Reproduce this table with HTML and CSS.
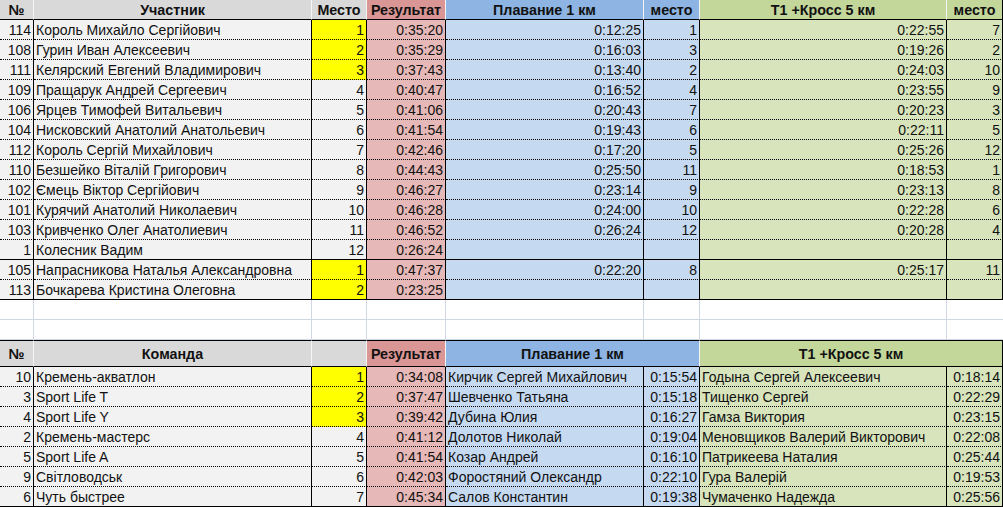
FILE: index.html
```html
<!DOCTYPE html>
<html lang="ru">
<head>
<meta charset="utf-8">
<title>Результаты</title>
<link rel="stylesheet" href="styles.css">
</head>
<body>
<div class="sheet">
  <div class="row head">
    <div class="hg">№</div>
    <div class="hg">Участник</div>
    <div class="hg">Место</div>
    <div class="hp">Результат</div>
    <div class="hb">Плавание 1 км</div>
    <div class="hb">место</div>
    <div class="hgr">T1 +Кросс 5 км</div>
    <div class="hgr">место</div>
  </div>

  <div class="row"><div class="g n">114</div><div class="g">Король Михайло Сергійович</div><div class="y n">1</div><div class="p n">0:35:20</div><div class="b n">0:12:25</div><div class="b n">1</div><div class="gr n">0:22:55</div><div class="gr n">7</div></div>
  <div class="row"><div class="g n">108</div><div class="g">Гурин Иван Алексеевич</div><div class="y n">2</div><div class="p n">0:35:29</div><div class="b n">0:16:03</div><div class="b n">3</div><div class="gr n">0:19:26</div><div class="gr n">2</div></div>
  <div class="row"><div class="g n">111</div><div class="g">Келярский Евгений Владимирович</div><div class="y n">3</div><div class="p n">0:37:43</div><div class="b n">0:13:40</div><div class="b n">2</div><div class="gr n">0:24:03</div><div class="gr n">10</div></div>
  <div class="row"><div class="g n">109</div><div class="g">Пращарук Андрей Сергеевич</div><div class="g n">4</div><div class="p n">0:40:47</div><div class="b n">0:16:52</div><div class="b n">4</div><div class="gr n">0:23:55</div><div class="gr n">9</div></div>
  <div class="row"><div class="g n">106</div><div class="g">Ярцев Тимофей Витальевич</div><div class="g n">5</div><div class="p n">0:41:06</div><div class="b n">0:20:43</div><div class="b n">7</div><div class="gr n">0:20:23</div><div class="gr n">3</div></div>
  <div class="row"><div class="g n">104</div><div class="g">Нисковский Анатолий Анатольевич</div><div class="g n">6</div><div class="p n">0:41:54</div><div class="b n">0:19:43</div><div class="b n">6</div><div class="gr n">0:22:11</div><div class="gr n">5</div></div>
  <div class="row"><div class="g n">112</div><div class="g">Король Сергій Михайлович</div><div class="g n">7</div><div class="p n">0:42:46</div><div class="b n">0:17:20</div><div class="b n">5</div><div class="gr n">0:25:26</div><div class="gr n">12</div></div>
  <div class="row"><div class="g n">110</div><div class="g">Безшейко Віталій Григорович</div><div class="g n">8</div><div class="p n">0:44:43</div><div class="b n">0:25:50</div><div class="b n">11</div><div class="gr n">0:18:53</div><div class="gr n">1</div></div>
  <div class="row"><div class="g n">102</div><div class="g">Ємець Віктор Сергійович</div><div class="g n">9</div><div class="p n">0:46:27</div><div class="b n">0:23:14</div><div class="b n">9</div><div class="gr n">0:23:13</div><div class="gr n">8</div></div>
  <div class="row"><div class="g n">101</div><div class="g">Курячий Анатолий Николаевич</div><div class="g n">10</div><div class="p n">0:46:28</div><div class="b n">0:24:00</div><div class="b n">10</div><div class="gr n">0:22:28</div><div class="gr n">6</div></div>
  <div class="row"><div class="g n">103</div><div class="g">Кривченко Олег Анатолиевич</div><div class="g n">11</div><div class="p n">0:46:52</div><div class="b n">0:26:24</div><div class="b n">12</div><div class="gr n">0:20:28</div><div class="gr n">4</div></div>
  <div class="row end"><div class="g n">1</div><div class="g">Колесник Вадим</div><div class="g n">12</div><div class="p n">0:26:24</div><div class="b n"></div><div class="b n"></div><div class="gr n"></div><div class="gr n"></div></div>
  <div class="row"><div class="g n">105</div><div class="g">Напрасникова Наталья Александровна</div><div class="y n">1</div><div class="p n">0:47:37</div><div class="b n">0:22:20</div><div class="b n">8</div><div class="gr n">0:25:17</div><div class="gr n">11</div></div>
  <div class="row end"><div class="g n">113</div><div class="g">Бочкарева Кристина Олеговна</div><div class="y n">2</div><div class="p n">0:23:25</div><div class="b n"></div><div class="b n"></div><div class="gr n"></div><div class="gr n"></div></div>

  <div class="row blank"><div></div><div></div><div></div><div></div><div></div><div></div><div></div><div></div></div>
  <div class="row blank"><div></div><div></div><div></div><div></div><div></div><div></div><div></div><div></div></div>

  <div class="row head head2">
    <div class="hg">№</div>
    <div class="hg">Команда</div>
    <div class="hg"></div>
    <div class="hp">Результат</div>
    <div class="hb span2">Плавание 1 км</div>
    <div class="hgr span2">T1 +Кросс 5 км</div>
  </div>

  <div class="row"><div class="g n">10</div><div class="g">Кремень-акватлон</div><div class="y n">1</div><div class="p n">0:34:08</div><div class="b">Кирчик Сергей Михайлович</div><div class="b n">0:15:54</div><div class="gr">Годына Сергей Алексеевич</div><div class="gr n">0:18:14</div></div>
  <div class="row"><div class="g n">3</div><div class="g">Sport Life T</div><div class="y n">2</div><div class="p n">0:37:47</div><div class="b">Шевченко Татьяна</div><div class="b n">0:15:18</div><div class="gr">Тищенко Сергей</div><div class="gr n">0:22:29</div></div>
  <div class="row"><div class="g n">4</div><div class="g">Sport Life Y</div><div class="y n">3</div><div class="p n">0:39:42</div><div class="b">Дубина Юлия</div><div class="b n">0:16:27</div><div class="gr">Гамза Виктория</div><div class="gr n">0:23:15</div></div>
  <div class="row"><div class="g n">2</div><div class="g">Кремень-мастерс</div><div class="g n">4</div><div class="p n">0:41:12</div><div class="b">Долотов Николай</div><div class="b n">0:19:04</div><div class="gr">Меновщиков Валерий Викторович</div><div class="gr n">0:22:08</div></div>
  <div class="row"><div class="g n">5</div><div class="g">Sport Life A</div><div class="g n">5</div><div class="p n">0:41:54</div><div class="b">Козар Андрей</div><div class="b n">0:16:10</div><div class="gr">Патрикеева Наталия</div><div class="gr n">0:25:44</div></div>
  <div class="row"><div class="g n">9</div><div class="g">Світловодськ</div><div class="g n">6</div><div class="p n">0:42:03</div><div class="b">Форостяний Олександр</div><div class="b n">0:22:10</div><div class="gr">Гура Валерій</div><div class="gr n">0:19:53</div></div>
  <div class="row end"><div class="g n">6</div><div class="g">Чуть быстрее</div><div class="g n">7</div><div class="p n">0:45:34</div><div class="b">Салов Константин</div><div class="b n">0:19:38</div><div class="gr">Чумаченко Надежда</div><div class="gr n">0:25:56</div></div>
</div>
</body>
</html>
```

FILE: styles.css
```css
html, body {
  margin: 0;
  padding: 0;
  background: #ffffff;
}

.sheet {
  width: 1003px;
  font-family: "Liberation Sans", Arial, sans-serif;
  font-size: 14px;
  color: #111;
}

.row {
  display: grid;
  grid-template-columns: 34px 278px 55px 79px 198px 56px 247px 56px;
}

.row > div {
  box-sizing: border-box;
  height: 20px;
  line-height: 21px;
  padding: 0 2px 0 2px;
  border-right: 1px solid #000;
  border-bottom: 1px dotted #000;
  white-space: nowrap;
  overflow: hidden;
}

.row.end > div {
  border-bottom: 1px solid #000;
}

.n { text-align: right; }

.g  { background: #f2f2f2; }
.y  { background: #ffff00; }
.p  { background: #e6b8b7; }
.b  { background: #c5d9f1; }
.gr { background: #d8e4bc; }

.head > div {
  font-weight: bold;
  font-size: 14.3px;
  text-align: center;
  border-right: 1px solid #f4f4f4;
  border-bottom: 1px solid #000;
}

.head > div:last-child { border-right: 1px solid #000; }

.hg  { background: #d9d9d9; }
.hp  { background: #da9694; }
.hb  { background: #8db4e2; }
.hgr { background: #c4d79b; }

.span2 { grid-column: span 2; }

.head2 > div {
  height: 27px;
  line-height: 26px;
  border-top: 1px solid #000;
}

.blank > div {
  background: #fff;
  border-right: 1px solid #d0d7e5;
  border-bottom: 1px solid #d0d7e5;
}
.blank > div:last-child { border-right: none; }
```
